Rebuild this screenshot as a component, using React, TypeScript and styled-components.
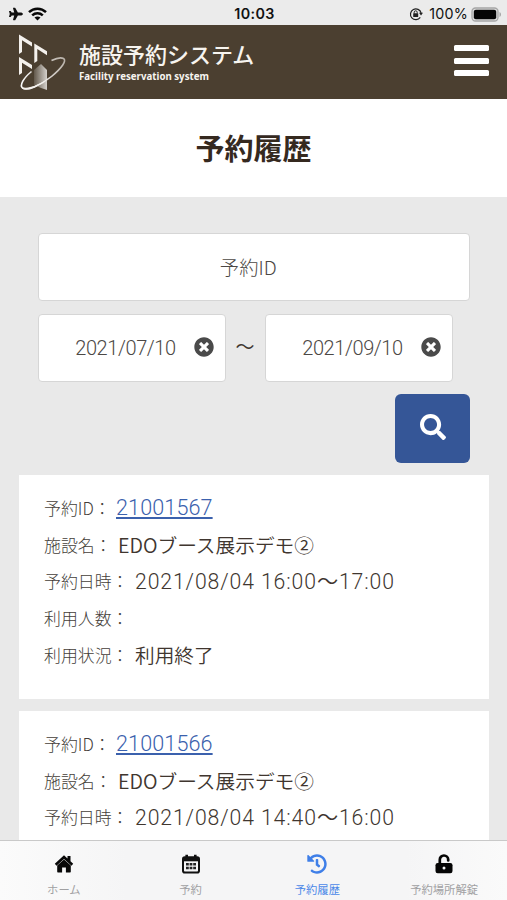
import React from "react";
import styled, { createGlobalStyle } from "styled-components";
import { FaHistory, FaPlane, FaSearch, FaTimesCircle } from "react-icons/fa";

const Global = createGlobalStyle`
  * { box-sizing: border-box; }
  body {
    margin: 0;
    background: #e9e9e9;
    font-family: "Noto Sans CJK JP", sans-serif;
    color: #40362f;
    overflow: hidden;
  }
`;

const Screen = styled.div`
  width: 507px;
  height: 900px;
  display: flex;
  flex-direction: column;
  overflow: hidden;
`;

const StatusBar = styled.div`
  flex: none;
  height: 25px;
  padding: 3px 5px 0 9px;
  display: grid;
  grid-template-columns: 1fr auto 1fr;
  align-items: center;
  background: #ebebeb;
  color: #111;
  font-family: Inter, sans-serif;
`;

const StatusGroup = styled.div<{ $end?: boolean }>`
  display: flex;
  align-items: center;
  justify-content: ${(p) => (p.$end ? "flex-end" : "flex-start")};
  gap: 5px;
`;

const Clock = styled.span`
  font-size: 14.3px;
  line-height: 20px;
  font-weight: 600;
  letter-spacing: 0.35px;
  margin-right: 2px;
`;

const Percent = styled.span`
  font-size: 14.3px;
  line-height: 20px;
  letter-spacing: 0.2px;
  margin: 0 -2px 0 1px;
`;

const Header = styled.header`
  flex: none;
  height: 73.5px;
  padding: 0 18px 0 17px;
  display: flex;
  align-items: flex-start;
  background: #4b3f30;
  color: #f7f4ef;
`;

const LogoMark = styled.svg`
  width: 52px;
  height: 62px;
  margin-top: 6px;
`;

const Brand = styled.div`
  flex: 1;
  padding: 11px 0 0 10px;
  white-space: nowrap;
`;

const BrandName = styled.div`
  font-size: 22px;
  font-weight: 500;
  line-height: 34px;
`;

const BrandSub = styled.div`
  font-family: "Noto Sans", sans-serif;
  font-size: 9.7px;
  font-weight: 700;
  line-height: 13px;
`;

const MenuButton = styled.button`
  width: 35px;
  height: 31px;
  margin-top: 20px;
  padding: 0;
  border: 0;
  background: none;
  display: flex;
  flex-direction: column;
  justify-content: space-between;
`;

const MenuLine = styled.span`
  height: 6px;
  border-radius: 1.5px;
  background: #fff;
`;

const TitleBar = styled.div`
  flex: none;
  height: 98px;
  padding-bottom: 2px;
  background: #fff;
  display: flex;
  align-items: center;
  justify-content: center;
`;

const Title = styled.h1`
  margin: 0;
  font-size: 29px;
  font-weight: 700;
  line-height: 40px;
  color: #35291f;
`;

const Main = styled.main`
  flex: 1;
  min-height: 0;
  overflow: hidden;
  padding: 36.5px 18px 0 19px;
`;

const SearchForm = styled.div`
  padding: 0 19px 0 18.5px;
  display: flex;
  flex-direction: column;
  gap: 12.5px;
`;

const Field = styled.div<{ $width?: number; $padEnd?: number }>`
  position: relative;
  width: ${(p) => (p.$width ? `${p.$width}px` : "100%")};
  height: 68px;
  padding-right: ${(p) => p.$padEnd ?? 0}px;
  background: #fff;
  border: 1.5px solid #d6d6d6;
  border-radius: 4px;
  display: flex;
  align-items: center;
  justify-content: center;
  color: #4c4845;
  font-size: 19.3px;
  font-weight: 300;
`;

const DateText = styled.span`
  font-family: Roboto, sans-serif;
  font-size: 20px;
  font-weight: 340;
  line-height: 24px;
  letter-spacing: -0.42px;
  margin: 1px 12px 0 0;
`;

const ClearIcon = styled(FaTimesCircle)`
  position: absolute;
  right: 11px;
  top: 22px;
  width: 20px;
  height: 20px;
  color: #4a4a4a;
`;

const DateRange = styled.div`
  display: flex;
  align-items: center;
`;

const Tilde = styled.span`
  width: 39px;
  text-align: center;
  font-size: 19px;
  line-height: 28px;
  margin-top: -3px;
  font-weight: 400;
`;

const SearchButton = styled.button`
  align-self: flex-end;
  width: 75px;
  height: 69px;
  padding: 0 0 3px;
  border: 0;
  border-radius: 6px;
  background: #355697;
  color: #fff;
  display: flex;
  align-items: center;
  justify-content: center;
  font-size: 26px;
`;

const CardList = styled.div`
  margin-top: 12px;
  display: flex;
  flex-direction: column;
  gap: 12px;
`;

const Card = styled.article`
  height: 224px;
  padding: 14.5px 25px;
  background: #fff;
`;

const Row = styled.div`
  height: 36.7px;
  display: flex;
  align-items: center;
  white-space: nowrap;
`;

const Label = styled.span<{ $width: number }>`
  flex: none;
  width: ${(p) => p.$width}px;
  font-size: 16.9px;
  font-weight: 300;
  line-height: 24px;
  color: #443e39;
`;

const Value = styled.span`
  font-size: 19.7px;
  font-weight: 350;
  line-height: 26px;
`;

const DateValue = styled(Value)`
  font-family: Roboto, "Noto Sans CJK JP", sans-serif;
  font-size: 21.2px;
  letter-spacing: 0.9px;
  margin-top: 2px;
`;

const IdLink = styled.a`
  font-family: Roboto, sans-serif;
  font-size: 21.6px;
  font-weight: 320;
  line-height: 26px;
  letter-spacing: 0.1px;
  color: #3b61ad;
  text-decoration: underline;
  text-decoration-thickness: 1.5px;
  text-underline-offset: 2px;
  margin-top: 1px;
`;

const TabBar = styled.nav`
  flex: none;
  height: 60px;
  border-top: 1px solid #c9c9c9;
  background: linear-gradient(90deg, #fbfbfb, #f5f5f6 25%, #f5f5f6 80%, #fafafa);
  display: grid;
  grid-template-columns: repeat(4, 1fr);
`;

const Tab = styled.div<{ $active?: boolean }>`
  display: flex;
  flex-direction: column;
  align-items: center;
  padding: 13px 0 0 1px;
  font-size: 20px;
  color: ${(p) => (p.$active ? "#3f7fe8" : "#080808")};
`;

const TabLabel = styled.span<{ $active?: boolean }>`
  margin-top: 7px;
  font-size: 11.3px;
  line-height: 17px;
  color: ${(p) => (p.$active ? "#4c88e8" : "#a0a0a2")};
`;

interface Reservation {
  id: string;
  facility: string;
  time: string;
  status?: string;
}

const reservations: Reservation[] = [
  { id: "21001567", facility: "EDOブース展示デモ②", time: "2021/08/04 16:00～17:00", status: "利用終了" },
  { id: "21001566", facility: "EDOブース展示デモ②", time: "2021/08/04 14:40～16:00" },
];

function WifiIcon() {
  return (
    <svg width="19" height="14" viewBox="0 0 19 14">
      <g fill="none" stroke="#080808" strokeWidth="2.5">
        <path d="M1 5.1C5.8.5 13.2.5 18 5.1" />
        <path d="M4.2 8.4c3-2.8 7.6-2.8 10.6 0" />
      </g>
      <path d="M6.5 10.5c1.7-1.5 4.3-1.5 6 0l-3 3z" fill="#080808" />
    </svg>
  );
}

function RotationLockIcon() {
  return (
    <svg width="14" height="14" viewBox="0 0 14 14" fill="none" stroke="#222">
      <path d="M11.3 10.4A5.4 5.4 0 1 1 12.1 6" strokeWidth="1.2" />
      <path d="M10 5.8h4l-2 2.7z" fill="#222" stroke="none" />
      <rect x="4.2" y="6.2" width="5" height="3.9" rx=".5" fill="#222" stroke="none" />
      <path d="M5.2 6.5V5.3a1.5 1.5 0 0 1 3 0v1.2" strokeWidth="1" />
    </svg>
  );
}

function BatteryIcon() {
  return (
    <svg width="31" height="15" viewBox="0 0 31 15">
      <rect x="1" y="1" width="26" height="13" rx="3.5" fill="#ddd" stroke="#a6a6a6" strokeWidth="1.3" />
      <rect x="2.8" y="2.8" width="22.4" height="9.4" rx="2" fill="#050505" />
      <path d="M28.5 5c2 .8 2 4.2 0 5z" fill="#a6a6a6" />
    </svg>
  );
}

function Logo() {
  return (
    <LogoMark viewBox="17 31 52 62">
      <defs>
        <linearGradient id="tower" x1="0" x2="1">
          <stop offset="0" stopColor="#62584b" />
          <stop offset="1" stopColor="#d5d1cc" />
        </linearGradient>
        <linearGradient id="orbit" gradientUnits="userSpaceOnUse" x1="21" y1="88" x2="65" y2="60">
          <stop offset="0" stopColor="#fff" />
          <stop offset="1" stopColor="#b9b2aa" />
        </linearGradient>
      </defs>
      <path d="M34 70l7-6 6 6v20l-6-2-7-3z" fill="url(#tower)" />
      <g fill="#f4f1ed">
        <path d="M19 34.5L32 42.5V46.500L22 40.3V52L19 54z" />
        <path d="M34.3 43.5L47 51.3V55.300L37.3 49V61L34.3 63z" />
        <path d="M19 57L32 65V69L22 62.8V73L19 75z" />
      </g>
      <path
        d="M31.5 71.5C23 78.5 19.5 85.5 22.5 88c4 3.5 18-2.5 29-11.500C62 68 67 60.500 63.500 58.500c-2.500-1.300-7-.4-12 2"
        fill="none"
        stroke="url(#orbit)"
        strokeWidth="1.6"
      />
      <path d="M22 87c6 2.500 18-2.500 29-10.800-10 9.800-23.500 15.800-29 12.300z" fill="#f4f1ed" />
    </LogoMark>
  );
}

function HomeIcon() {
  return (
    <svg width="20" height="20" viewBox="0 0 20 20" fill="#080808">
      <path d="M10 1.200L.8 9.700l1.700 2L10 4.900l7.500 6.800 1.700-2-2.700-2.500V1.900h-3v2.500z" />
      <path d="M10 5.400l6.800 6.100v6.100c0 .6-.4 1-1 1h-3.900v-5H8.100v5H4.200c-.6 0-1-.4-1-1v-6.100z" />
    </svg>
  );
}

function CalendarIcon() {
  return (
    <svg width="20" height="20" viewBox="0 0 20 20">
      <path d="M5.700.8v3M14.300.8v3" stroke="#111" strokeWidth="2.600" />
      <rect x="2" y="3.300" width="16" height="15.200" rx="1.800" fill="none" stroke="#111" strokeWidth="2" />
      <path d="M2 3.300h16v4H2z" fill="#111" />
      <path d="M5 9h2.800v2.500H5zm3.600 0h2.800v2.500H8.600zm3.600 0H15v2.500h-2.800zM5 12.700h2.800v2.500H5zm3.600 0h2.800v2.500H8.600zm3.600 0H15v2.500h-2.800z" fill="#222" />
    </svg>
  );
}

function UnlockIcon() {
  return (
    <svg width="20" height="20" viewBox="0 0 20 20">
      <path d="M5.800 10V5.800a4.200 4.200 0 0 1 8.400-.2v.8" fill="none" stroke="#050505" strokeWidth="2.700" strokeLinecap="round" />
      <rect x="1.500" y="9" width="17" height="10.300" rx="2.200" fill="#050505" />
      <circle cx="10" cy="14.100" r="1.500" fill="#f5f5f6" />
    </svg>
  );
}

function ReservationCard({ item }: { item: Reservation }) {
  return (
    <Card>
      <Row><Label $width={72}>予約ID：</Label><IdLink href="#">{item.id}</IdLink></Row>
      <Row><Label $width={74}>施設名：</Label><Value>{item.facility}</Value></Row>
      <Row><Label $width={91}>予約日時：</Label><DateValue>{item.time}</DateValue></Row>
      {item.status && (
        <>
          <Row><Label $width={91}>利用人数：</Label></Row>
          <Row><Label $width={91}>利用状況：</Label><Value>{item.status}</Value></Row>
        </>
      )}
    </Card>
  );
}

export default function App() {
  return (
    <Screen>
      <Global />
      <StatusBar>
        <StatusGroup><FaPlane size={14} /><WifiIcon /></StatusGroup>
        <Clock>10:03</Clock>
        <StatusGroup $end><RotationLockIcon /><Percent>100%</Percent><BatteryIcon /></StatusGroup>
      </StatusBar>
      <Header>
        <Logo />
        <Brand>
          <BrandName>施設予約システム</BrandName>
          <BrandSub>Facility reservation system</BrandSub>
        </Brand>
        <MenuButton aria-label="メニュー"><MenuLine /><MenuLine /><MenuLine /></MenuButton>
      </Header>
      <TitleBar><Title>予約履歴</Title></TitleBar>
      <Main>
        <SearchForm>
          <Field $padEnd={11}>予約ID</Field>
          <DateRange>
            <Field $width={188}><DateText>2021/07/10</DateText><ClearIcon /></Field>
            <Tilde>～</Tilde>
            <Field $width={188}><DateText>2021/09/10</DateText><ClearIcon /></Field>
          </DateRange>
          <SearchButton aria-label="検索"><FaSearch /></SearchButton>
        </SearchForm>
        <CardList>
          {reservations.map((item) => <ReservationCard key={item.id} item={item} />)}
        </CardList>
      </Main>
      <TabBar>
        <Tab><HomeIcon /><TabLabel>ホーム</TabLabel></Tab>
        <Tab><CalendarIcon /><TabLabel>予約</TabLabel></Tab>
        <Tab $active><FaHistory /><TabLabel $active>予約履歴</TabLabel></Tab>
        <Tab><UnlockIcon /><TabLabel>予約場所解錠</TabLabel></Tab>
      </TabBar>
    </Screen>
  );
}
